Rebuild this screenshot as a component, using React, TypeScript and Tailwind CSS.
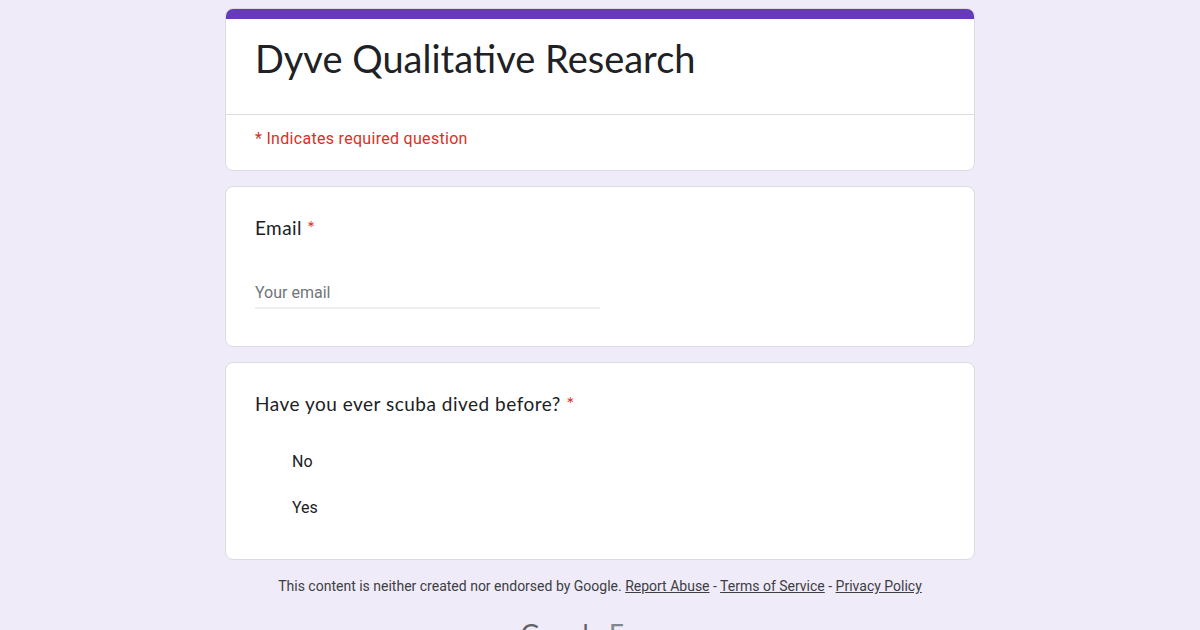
import React from 'react'

const heading = { fontFamily: '"Lato", "Open Sans", sans-serif' }
const body = { fontFamily: 'Roboto, "Liberation Sans", sans-serif' }

export default function App() {
  return (
    <div className="h-[630px] overflow-hidden bg-[#f0ebf8] pt-2" style={body}>
      <div className="mx-auto flex w-[750px] flex-col gap-[15px]">
        {/* Title card */}
        <div className="overflow-hidden rounded-lg border border-[#dadce0] bg-white">
          <div className="h-[10px] bg-[#673ab7]" />
          <div className="border-b border-[#dadce0] px-[29px] pt-[15px] pb-[32px]">
            <h1 className="text-[38px] leading-[48px] text-[#202124]" style={heading}>
              Dyve Qualitative Research
            </h1>
          </div>
          <div className="px-[29px] pt-[14px] pb-[21px] text-[16px] leading-5 tracking-[0.3px] text-[#d93025]">
            * Indicates required question
          </div>
        </div>

        {/* Email */}
        <div className="rounded-lg border border-[#dadce0] bg-white px-[29px] pt-[29px] pb-[37px]">
          <div className="text-[19px] leading-6 tracking-[0.4px] text-[#202124]" style={heading}>
            Email <span className="text-[#d93025]">*</span>
          </div>
          <div className="mt-[43px] w-[345px] border-b-2 border-[#eeeeee] pb-[4px] text-[16px] leading-5 text-[#70757a]">
            Your email
          </div>
        </div>

        {/* Scuba */}
        <div className="rounded-lg border border-[#dadce0] bg-white px-[29px] pt-[29px] pb-[41px]">
          <div className="text-[19px] leading-6 tracking-[0.5px] text-[#202124]" style={heading}>
            Have you ever scuba dived before? <span className="text-[#d93025]">*</span>
          </div>
          <div className="mt-[36px] flex flex-col gap-[26px] pl-[37px] text-[16px] leading-5 text-[#202124]">
            <span>No</span>
            <span>Yes</span>
          </div>
        </div>
      </div>

      {/* Footer */}
      <div className="mt-[18px] text-center text-[14px] leading-4 text-[#3c4043]">
        This content is neither created nor endorsed by Google.{' '}
        <a className="underline">Report Abuse</a> - <a className="underline">Terms of Service</a> -{' '}
        <a className="underline">Privacy Policy</a>
      </div>
      <div className="mt-[24px] text-center text-[26px] leading-8 text-[#5f6368]" style={heading}>
        Google <span className="text-[#80868b]">Forms</span>
      </div>
    </div>
  )
}
